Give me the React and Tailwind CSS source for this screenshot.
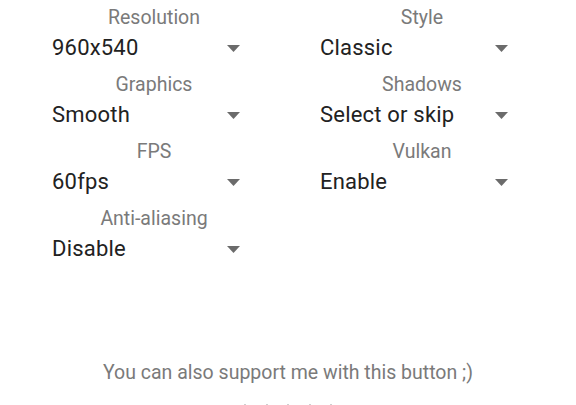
import React from "react";

function Spinner({ label, value }) {
  return (
    <div className="flex flex-col">
      <div className="h-[24px] pt-[2px] flex items-center justify-center text-[19.5px] leading-none text-[#7a7a7a]">
        {label}
      </div>
      <div className="h-[38px] flex items-center justify-between pl-[12px] pr-[28px]">
        <span className="text-[22px] leading-none text-[#222222] tracking-[0.2px]">{value}</span>
        <svg width="13" height="7" viewBox="0 0 13 7" className="block">
          <path d="M0 0 L13 0 L6.5 7 Z" fill="#6b6b6b" />
        </svg>
      </div>
      <div className="h-[5px]" />
    </div>
  );
}

export default function App() {
  return (
    <div
      className="w-[576px] h-[405px] bg-white overflow-hidden flex flex-col"
      style={{ fontFamily: "Roboto, 'Noto Sans', sans-serif" }}
    >
      <div className="grid grid-cols-2 gap-x-[40px] px-[40px] pt-[5px]">
        <div className="flex flex-col">
          <Spinner label="Resolution" value="960x540" />
          <Spinner label="Graphics" value="Smooth" />
          <Spinner label="FPS" value="60fps" />
          <Spinner label="Anti-aliasing" value="Disable" />
        </div>
        <div className="flex flex-col">
          <Spinner label="Style" value="Classic" />
          <Spinner label="Shadows" value="Select or skip" />
          <Spinner label="Vulkan" value="Enable" />
        </div>
      </div>
      <div className="mt-[90px] text-center text-[19.5px] leading-none text-[#7a7a7a]">
        You can also support me with this button ;)
      </div>
      <div className="mt-auto flex justify-center gap-[19.5px] h-[1px]">
        <span className="w-[2px] h-[1px] bg-[#cfcfcf]" />
        <span className="w-[2px] h-[1px] bg-[#cfcfcf]" />
        <span className="w-[2px] h-[1px] bg-[#cfcfcf]" />
        <span className="w-[2px] h-[1px] bg-[#cfcfcf]" />
        <span className="w-[2px] h-[1px] bg-[#cfcfcf]" />
      </div>
    </div>
  );
}
